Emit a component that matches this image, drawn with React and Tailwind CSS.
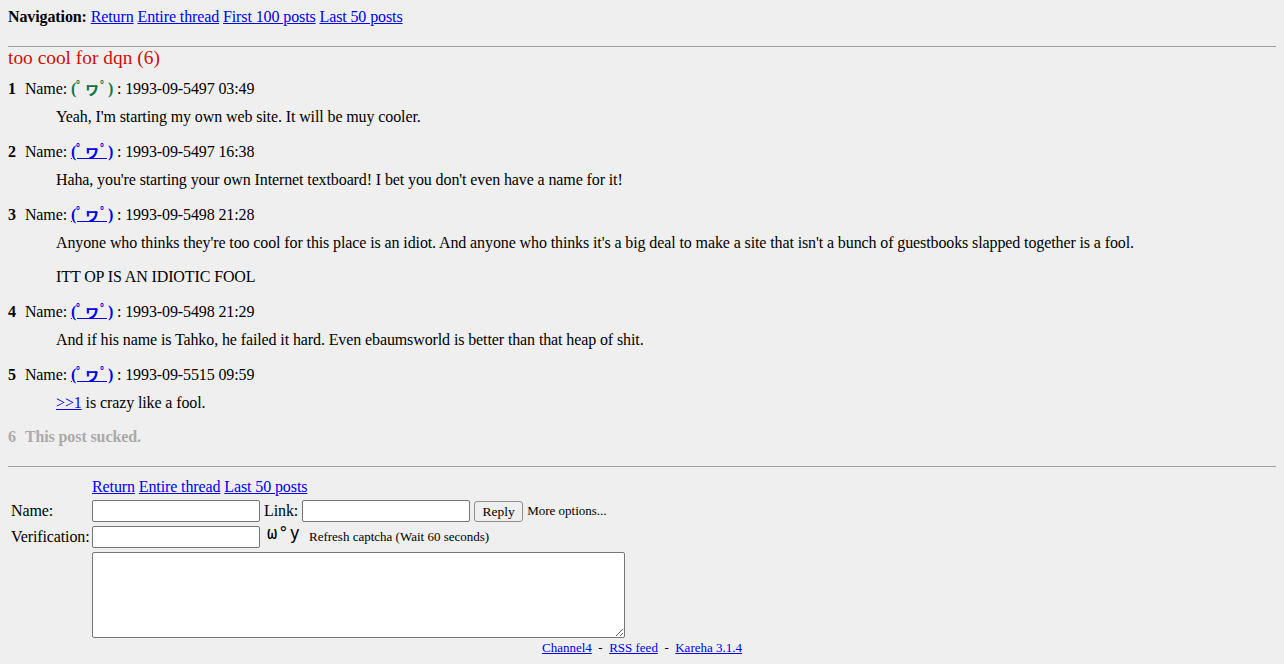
import React from "react";

const serif = { fontFamily: '"Liberation Serif", "Noto Sans CJK JP", serif' };

function Name({ link }) {
  const t = "(ﾟヮﾟ)";
  if (link)
    return (
      <a href="#" className="font-bold text-[#0000ee] underline">
        {t}
      </a>
    );
  return <span className="font-bold text-[#117743]">{t}</span>;
}

function Post({ n, link, date, children }) {
  return (
    <div>
      <div className="leading-[18px]">
        <span className="font-bold">{n}</span>
        <span className="ml-[9px]">Name: </span>
        <Name link={link} />
        <span> : {date}</span>
      </div>
      <div className="ml-[48px] mt-[10px] flex flex-col gap-[16px] leading-[18px]">{children}</div>
    </div>
  );
}

export default function App() {
  return (
    <div className="min-h-screen bg-[#efefef] p-2 text-[16px] tracking-[-0.11px] text-black" style={serif}>
      <div className="leading-[18px]">
        <b>Navigation:</b>{" "}
        <a href="#" className="text-[#0000ee] underline">Return</a>{" "}
        <a href="#" className="text-[#0000ee] underline">Entire thread</a>{" "}
        <a href="#" className="text-[#0000ee] underline">First 100 posts</a>{" "}
        <a href="#" className="text-[#0000ee] underline">Last 50 posts</a>
      </div>
      <div className="mt-[20px] border-t border-[#a0a0a0]" />
      <div className="text-[19.4px] leading-[22px] tracking-normal text-[#cc1105]">too cool for dqn (6)</div>
      <div className="mt-[11px] flex flex-col gap-[17px]">
        <Post n={1} date="1993-09-5497 03:49">
          <div>Yeah, I'm starting my own web site. It will be muy cooler.</div>
        </Post>
        <Post n={2} link date="1993-09-5497 16:38">
          <div>Haha, you're starting your own Internet textboard! I bet you don't even have a name for it!</div>
        </Post>
        <Post n={3} link date="1993-09-5498 21:28">
          <div>
            Anyone who thinks they're too cool for this place is an idiot. And anyone who thinks it's a big deal to make a site that isn't a bunch of guestbooks slapped together is a fool.
          </div>
          <div>ITT OP IS AN IDIOTIC FOOL</div>
        </Post>
        <Post n={4} link date="1993-09-5498 21:29">
          <div>And if his name is Tahko, he failed it hard. Even ebaumsworld is better than that heap of shit.</div>
        </Post>
        <Post n={5} link date="1993-09-5515 09:59">
          <div>
            <a href="#" className="text-[#0000ee] underline">&gt;&gt;1</a> is crazy like a fool.
          </div>
        </Post>
      </div>
      <div className="mt-[16px] font-bold leading-[18px] text-[#aaaaaa]">
        6<span className="ml-[9px]">This post sucked.</span>
      </div>
      <div className="mt-[20px] border-t border-[#a0a0a0]" />

      <div className="mt-[10px] grid grid-cols-[81px_auto] grid-rows-[19px_22px_22px_86px] items-center gap-y-[4px] pl-[3px]">
        <div />
        <div className="self-end leading-[18px]">
          <a href="#" className="text-[#0000ee] underline">Return</a>{" "}
          <a href="#" className="text-[#0000ee] underline">Entire thread</a>{" "}
          <a href="#" className="text-[#0000ee] underline">Last 50 posts</a>
        </div>

        <div className="leading-[18px]">Name:</div>
        <div className="flex h-[22px] items-center leading-[18px]">
          <input className="h-[22px] w-[168px] rounded-[2px] border border-[#767676] bg-white" />
          <span className="ml-[4px] mr-[4px]">Link:</span>
          <input className="h-[22px] w-[168px] rounded-[2px] border border-[#767676] bg-white" />
          <button
            className="ml-[4px] h-[21px] w-[49px] rounded-[3px] border border-[#8f8f8f] bg-[#efefef] text-[13.5px] leading-[17px] tracking-normal"
            style={serif}
          >
            Reply
          </button>
          <span className="ml-[4px] text-[13px] leading-[16px] tracking-normal">More options...</span>
        </div>

        <div className="leading-[18px]">Verification:</div>
        <div className="flex h-[22px] items-center leading-[18px]">
          <input className="h-[22px] w-[168px] rounded-[2px] border border-[#767676] bg-white" />
          <span
            className="ml-[7px] h-[18px] w-[38px] -translate-y-[4px] text-[17px] leading-[18px] tracking-[1px]"
            style={{ fontFamily: '"DejaVu Sans Mono", monospace' }}
          >
            ω°y
          </span>
          <span className="ml-[4px] text-[13px] leading-[16px] tracking-normal">Refresh captcha (Wait 60 seconds)</span>
        </div>

        <div />
        <div className="self-start">
          <textarea className="block h-[86px] w-[533px] rounded-[2px] border border-[#767676] bg-white" />
        </div>
      </div>
      <div className="mt-[2px] text-center text-[13px] leading-[16px] tracking-normal">
        <a href="#" className="text-[#0000ee] underline">Channel4</a>
        {"\u00a0 - \u00a0"}
        <a href="#" className="text-[#0000ee] underline">RSS feed</a>
        {"\u00a0 - \u00a0"}
        <a href="#" className="text-[#0000ee] underline">Kareha 3.1.4</a>
      </div>
    </div>
  );
}
